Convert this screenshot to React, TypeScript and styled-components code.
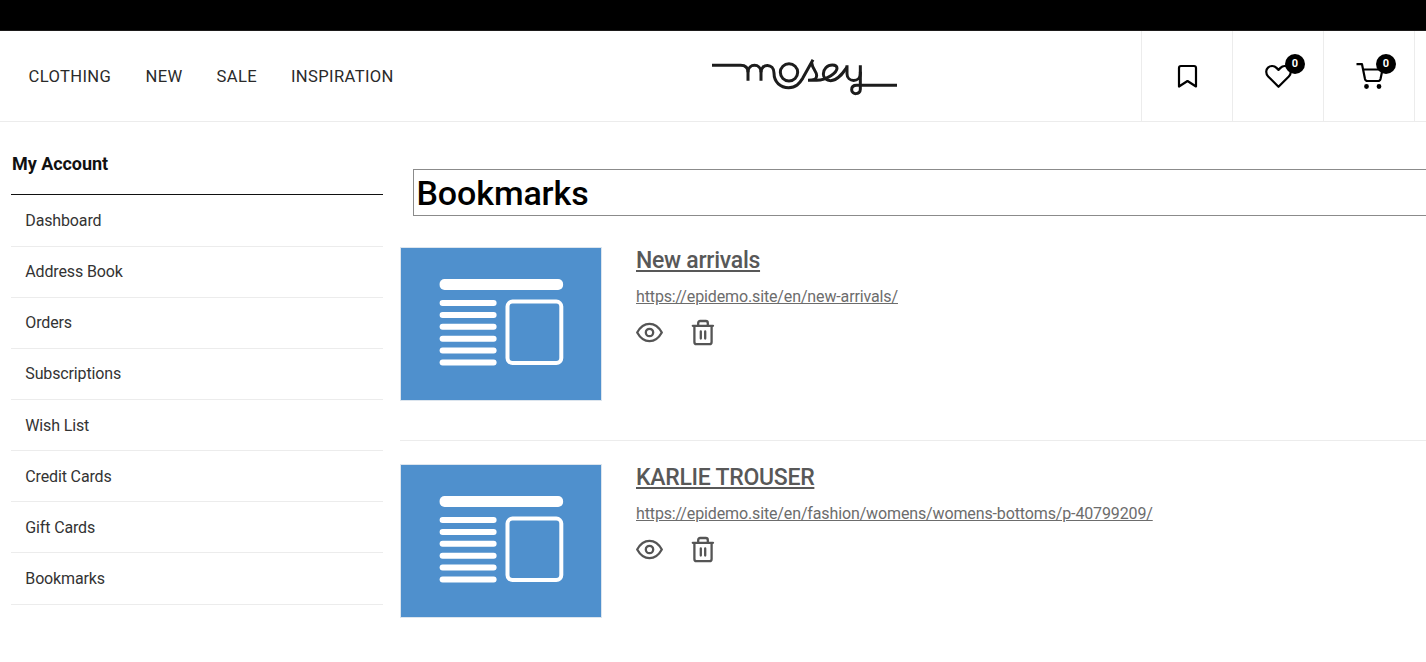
import React from "react";
import styled, { createGlobalStyle } from "styled-components";

const GlobalStyle = createGlobalStyle`
  * { box-sizing: border-box; }
  body { margin: 0; background: #fff; font-family: Roboto, sans-serif; color: #212121; overflow: hidden; }
  a { color: inherit; }
`;

const Page = styled.div`
  width: 100%;
  height: 662px;
  overflow: hidden;
`;

const TopBar = styled.div`
  height: 31px;
  background: #000;
  border-bottom: 1px solid #1c1a1a;
`;

const Header = styled.header`
  display: flex;
  justify-content: space-between;
  height: 91px;
  border-bottom: 1px solid #ececec;
`;

const Nav = styled.nav`
  display: flex;
  align-items: center;
  width: 700px;
  padding: 2px 0 0 28.5px;
`;

const NavItem = styled.a<{ $width: number }>`
  flex: none;
  width: ${(p) => p.$width}px;
  font-size: 16.6px;
  line-height: 24px;
  letter-spacing: 0.35px;
  color: #2a2a2a;
`;

const Logo = styled.svg`
  flex: none;
  width: 210px;
  height: 60px;
  margin-top: 14px;
`;

const Actions = styled.div`
  display: flex;
  width: 285px;
  margin-left: auto;
  border-left: 1px solid #ececec;
`;

const Action = styled.button`
  position: relative;
  flex: none;
  width: 91px;
  padding: 0;
  border: 0;
  border-right: 1px solid #ececec;
  background: none;
`;

const ActionIcon = styled.svg`
  display: block;
  width: 90px;
  height: 90px;
`;

const Count = styled.span`
  position: absolute;
  left: 52px;
  top: 23px;
  width: 20px;
  height: 20px;
  border-radius: 50%;
  background: #000;
  color: #fff;
  font: 700 11px/20px Roboto, sans-serif;
  text-align: center;
`;

const Body = styled.div`
  display: flex;
`;

const Sidebar = styled.aside`
  flex: none;
  width: 372px;
  margin-left: 11px;
  padding-top: 27px;
`;

const SidebarTitle = styled.h2`
  height: 46px;
  margin: 0 0 0.38px;
  padding-left: 1px;
  border-bottom: 1px solid #111;
  font-size: 18px;
  font-weight: 700;
  line-height: 30px;
  letter-spacing: -0.05px;
  color: #111;
`;

const SidebarLink = styled.a`
  display: block;
  height: 51.15px;
  padding: 0.62px 0 0 14.3px;
  border-bottom: 1px solid #ececec;
  font-size: 16px;
  line-height: 50px;
  letter-spacing: -0.14px;
  color: #333;
`;

const Main = styled.main`
  flex: 1;
  min-width: 0;
  margin-left: 17px;
  padding-top: 47px;
`;

const Heading = styled.h1`
  height: 47px;
  margin: 0 -4px 18px 13px;
  padding-left: 2.5px;
  border: 1px solid #8b8b8b;
  font-size: 34px;
  font-weight: 500;
  line-height: 47px;
  letter-spacing: -0.1px;
  color: #000;
`;

const Bookmark = styled.article<{ $last?: boolean }>`
  display: flex;
  height: ${(p) => (p.$last ? 200 : 207)}px;
  padding-top: 13px;
  border-bottom: ${(p) => (p.$last ? "0" : "1px solid #ececec")};
  margin-bottom: 10px;
`;

const Thumbnail = styled.svg`
  flex: none;
  width: 202px;
  height: 154px;
`;

const Details = styled.div`
  margin-left: 34px;
`;

const Title = styled.a`
  display: block;
  width: max-content;
  font-size: 23px;
  font-weight: 500;
  line-height: 28px;
  letter-spacing: -0.27px;
  text-decoration: underline;
  color: #585858;
`;

const Url = styled.a`
  display: block;
  width: max-content;
  margin-top: 10px;
  font-size: 16px;
  line-height: 24px;
  letter-spacing: -0.13px;
  text-decoration: underline;
  color: #6c6c6c;
`;

const Tools = styled.div`
  display: flex;
  gap: 26px;
  margin-top: 9.5px;
`;

const ToolIcon = styled.svg`
  width: 27px;
  height: 28px;
  fill: none;
  stroke: #555;
  stroke-width: 2.3;
  stroke-linecap: round;
  stroke-linejoin: round;
`;

const navItems = [
  { label: "CLOTHING", width: 117 },
  { label: "NEW", width: 71 },
  { label: "SALE", width: 74.5 },
  { label: "INSPIRATION", width: 110 },
];

const accountLinks = [
  "Dashboard",
  "Address Book",
  "Orders",
  "Subscriptions",
  "Wish List",
  "Credit Cards",
  "Gift Cards",
  "Bookmarks",
];

const bookmarks = [
  { title: "New arrivals", url: "https://epidemo.site/en/new-arrivals/" },
  { title: "KARLIE TROUSER", url: "https://epidemo.site/en/fashion/womens/womens-bottoms/p-40799209/" },
];

const MoseyLogo = () => (
  <Logo viewBox="0 0 630 180" fill="none" stroke="#1c1c1c" strokeWidth="9">
    <path d="M36 61H122C136 61 144 69 144 82V107" />
    <path d="M144 82C144 54 183 54 183 82V107" />
    <path d="M183 82C183 54 222 54 222 84C222 112 242 128 266 128C288 128 298 116 308 100L339 44" />
    <circle cx="267" cy="82" r="26" />
    <path d="M335 53C337 72 350 78 350 92C350 103 342 106 324 106H350C382 106 411 82 411 70C411 63 404 60 397 60C381 60 370 73 370 87C370 100 380 107 392 107C414 107 430 82 441 66" />
    <path d="M441 61V86C441 113 481 113 481 86V61" />
    <path d="M481 80V133C481 150 455 150 455 134C455 125 461 121 470 121H591" />
  </Logo>
);

const PagePreview = () => (
  <Thumbnail viewBox="0 0 202 154">
    <rect x="0.5" y="0.5" width="201" height="153" fill="#4f90cd" stroke="#dce5ee" />
    <rect x="39.6" y="32" width="123.5" height="11" rx="5" fill="#fff" />
    {[0, 1, 2, 3, 4, 5].map((i) => (
      <rect key={i} x="39.6" y={53 + i * 11.9} width="57" height="6" rx="3" fill="#fff" />
    ))}
    <rect x="107.5" y="54.6" width="53.8" height="61.4" rx="5" fill="none" stroke="#fff" strokeWidth="4" />
  </Thumbnail>
);

export default function App() {
  return (
    <Page>
      <GlobalStyle />
      <TopBar />
      <Header>
        <Nav>
          {navItems.map((item) => (
            <NavItem key={item.label} $width={item.width}>{item.label}</NavItem>
          ))}
        </Nav>
        <MoseyLogo />
        <Actions>
          <Action aria-label="Bookmarks">
            <ActionIcon viewBox="0 0 90 90" fill="none" stroke="#000" strokeWidth="2.2" strokeLinejoin="round">
              <path d="M37 55.5V37Q37 35 39 35H52Q54 35 54 37V55.5L45.5 50Z" />
            </ActionIcon>
          </Action>
          <Action aria-label="Wish list">
            <ActionIcon viewBox="0 0 90 90" fill="none" stroke="#000" strokeWidth="2.2" strokeLinejoin="round">
              <path d="M45.5 55.8L35.2 45.4C32.5 42.5 32.7 38.7 35 36.6C37.5 34.3 41.2 34.6 43.5 36.9L45.5 38.9L47.5 36.9C49.8 34.6 53.5 34.3 56 36.6C58.3 38.7 58.5 42.5 55.8 45.4Z" />
            </ActionIcon>
            <Count>0</Count>
          </Action>
          <Action aria-label="Cart">
            <ActionIcon viewBox="0 0 90 90" fill="none" stroke="#000" strokeWidth="2.2" strokeLinejoin="round">
              <path d="M32.5 33.2H38L41 48Q41.5 50 43.5 50H54Q56 50 56.5 48L58.5 38.5H39.2" />
              <circle cx="42.5" cy="55.5" r="1.3" fill="#000" />
              <circle cx="55" cy="55.5" r="1.3" fill="#000" />
            </ActionIcon>
            <Count>0</Count>
          </Action>
        </Actions>
      </Header>
      <Body>
        <Sidebar>
          <SidebarTitle>My Account</SidebarTitle>
          {accountLinks.map((label) => (
            <SidebarLink key={label}>{label}</SidebarLink>
          ))}
        </Sidebar>
        <Main>
          <Heading>Bookmarks</Heading>
          {bookmarks.map((b, i) => (
            <Bookmark key={b.url} $last={i === bookmarks.length - 1}>
              <PagePreview />
              <Details>
                <Title>{b.title}</Title>
                <Url>{b.url}</Url>
                <Tools>
                  <ToolIcon viewBox="0 0 27 28">
                    <path d="M1.2 13.5C7.5 2 19.5 2 25.8 13.5C19.5 25 7.5 25 1.2 13.5Z" />
                    <circle cx="13.5" cy="13.5" r="3.7" />
                  </ToolIcon>
                  <ToolIcon viewBox="0 0 27 28">
                    <path d="M3.8 6.8H24M9.2 6.5V4Q9.2 2 11.2 2H16.8Q18.8 2 18.8 4V6.5M5.4 7V23Q5.4 25.2 7.4 25.2H20.6Q22.6 25.2 22.6 23V7M11.8 12.5V19.5M16.2 12.5V19.5" />
                  </ToolIcon>
                </Tools>
              </Details>
            </Bookmark>
          ))}
        </Main>
      </Body>
    </Page>
  );
}
